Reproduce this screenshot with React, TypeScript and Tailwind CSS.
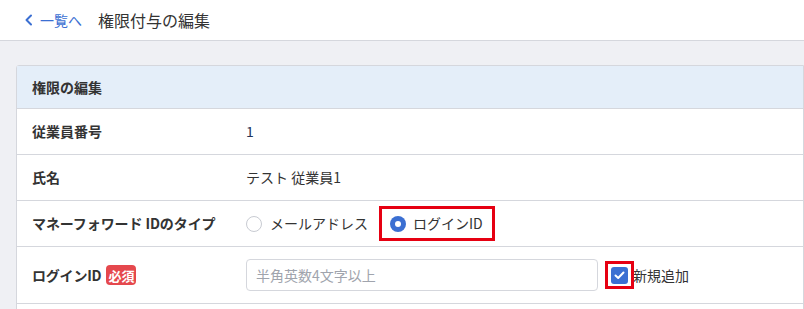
import React from "react";

export default function App() {
  const font = { fontFamily: '"Noto Sans CJK JP", "Noto Sans", sans-serif' };
  return (
    <div className="w-[804px] h-[309px] overflow-hidden bg-[#eff0f4] text-[#333]" style={font}>
      <div className="h-[41px] bg-white border-b border-[#d5d7dd] flex items-center pl-[24px]">
        <a className="flex items-center text-[#3b6fd2] text-[14px] gap-[6px]">
          <svg width="10" height="12" viewBox="0 0 10 12" fill="none">
            <path d="M7 1.5 L2.5 6 L7 10.5" stroke="#3b6fd2" strokeWidth="2" strokeLinecap="round" strokeLinejoin="round" />
          </svg>
          <span>一覧へ</span>
        </a>
        <span className="ml-[16px] text-[16px] text-[#333]">権限付与の編集</span>
      </div>
      <div className="pt-[24px] pl-[16px]">
        <div className="bg-white border border-[#d5d7dd] rounded-tl-[3px]">
          <div className="h-[43px] bg-[#e4eef9] border-b border-[#d5d7dd] flex items-center pl-[15px] text-[14px] font-bold">
            権限の編集
          </div>
          <div className="h-[46px] border-b border-[#d5d7dd] flex items-center text-[14px]">
            <div className="w-[229px] pl-[15px] font-bold">従業員番号</div>
            <div className="text-[#24345a]">1</div>
          </div>
          <div className="h-[46px] border-b border-[#d5d7dd] flex items-center text-[14px]">
            <div className="w-[229px] pl-[15px] font-bold">氏名</div>
            <div>テスト 従業員1</div>
          </div>
          <div className="h-[46px] border-b border-[#d5d7dd] flex items-center text-[14px]">
            <div className="w-[229px] pl-[15px] font-bold tracking-[-0.1px]">マネーフォワード IDのタイプ</div>
            <div className="flex items-center">
              <span className="w-[16px] h-[16px] rounded-full border border-[#c8cbd2] bg-white"></span>
              <span className="ml-[8px]">メールアドレス</span>
              <div className="ml-[11px] h-[35px] border-[3px] border-[#e60012] flex items-center pl-[8px] pr-[9px]">
                <span className="w-[16px] h-[16px] rounded-full bg-[#3b6fd2] flex items-center justify-center">
                  <span className="w-[6px] h-[6px] rounded-full bg-white"></span>
                </span>
                <span className="ml-[7px]">ログインID</span>
              </div>
            </div>
          </div>
          <div className="h-[57px] border-b border-[#d5d7dd] flex items-center text-[14px]">
            <div className="w-[229px] pl-[15px] font-bold flex items-center">
              <span className="tracking-[-0.2px]">ログインID</span>
              <span className="ml-[5px] bg-[#e5484d] text-white text-[13px] font-bold rounded-[4px] px-[2px] h-[20px] flex items-center leading-none">必須</span>
            </div>
            <div className="w-[352px] h-[32px] border border-[#d5d7dd] rounded-[4px] flex items-center pl-[9px] text-[#a0a4ad]">
              半角英数4文字以上
            </div>
            <div className="ml-[7px] w-[29px] h-[28px] border-[3px] border-[#e60012] flex items-center justify-center">
              <span className="w-[17px] h-[17px] rounded-[3px] bg-[#3b6fd2] flex items-center justify-center">
                <svg width="11" height="9" viewBox="0 0 11 9" fill="none">
                  <path d="M1.5 4.5 L4.2 7 L9.5 1.5" stroke="white" strokeWidth="2" strokeLinecap="round" strokeLinejoin="round" />
                </svg>
              </span>
            </div>
            <span className="ml-[-1px]">新規追加</span>
          </div>
          <div className="h-[20px]"></div>
        </div>
      </div>
    </div>
  );
}
